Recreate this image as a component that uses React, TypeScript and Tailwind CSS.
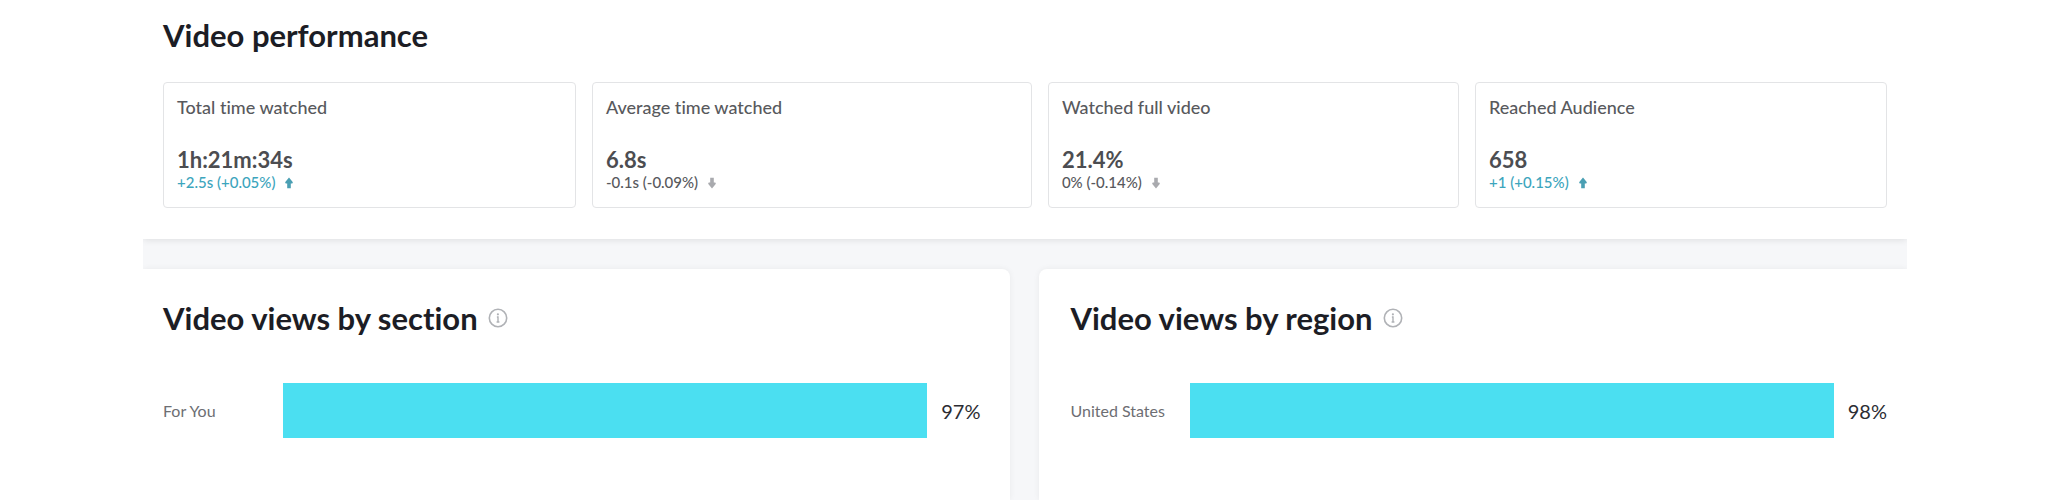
type Metric = { label: string; value: string; delta: string; up: boolean; grow: string };

const metrics: Metric[] = [
  { label: "Total time watched", value: "1h:21m:34s", delta: "+2.5s (+0.05%)", up: true, grow: "flex-[413]" },
  { label: "Average time watched", value: "6.8s", delta: "-0.1s (-0.09%)", up: false, grow: "flex-[442]" },
  { label: "Watched full video", value: "21.4%", delta: "0% (-0.14%)", up: false, grow: "flex-[411]" },
  { label: "Reached Audience", value: "658", delta: "+1 (+0.15%)", up: true, grow: "flex-[412]" },
];

function Arrow({ up }: { up: boolean }) {
  return (
    <svg
      viewBox="0 0 8 12"
      className={up ? "h-3 w-2 text-[#4a9fb3]" : "h-3 w-2 rotate-180 text-[#a9aaae]"}
      aria-hidden="true"
    >
      <path d="M4 0.4 7.9 5.2 7.3 6.4H5.8V11.2H2.2V6.4H0.7L0.1 5.2Z" fill="currentColor" />
    </svg>
  );
}

function MetricCard({ metric }: { metric: Metric }) {
  return (
    <article className={`${metric.grow} min-w-0 rounded border border-[#e3e4e6] px-[13px] pt-[11px] pb-[14px]`}>
      <h3 className="text-lg leading-[26px] font-medium text-[#58595d]">{metric.label}</h3>
      <p className="mt-7 text-[22px] leading-6 font-bold text-[#4c4d51]">{metric.value}</p>
      <div
        className={`flex items-center gap-[10px] text-[15px] leading-[21px] font-medium ${
          metric.up ? "text-[#3ca5bd]" : "text-[#58595d]"
        }`}
      >
        <span>{metric.delta}</span>
        <Arrow up={metric.up} />
      </div>
    </article>
  );
}

function InfoIcon() {
  return (
    <svg viewBox="0 0 20 20" className="h-5 w-5 text-[#b0b2b6]" fill="none" stroke="currentColor" aria-hidden="true">
      <circle cx="10" cy="10" r="8.7" strokeWidth="1.6" />
      <circle cx="9.9" cy="6.3" r="1.1" fill="currentColor" stroke="none" />
      <path d="M8.9 9H10V13.9M8.6 14H11.4" strokeWidth="1.4" />
    </svg>
  );
}

type PanelProps = { title: string; label: string; value: string; className: string };

function BarPanel({ title, label, value, className }: PanelProps) {
  return (
    <section className={`min-w-0 bg-white pt-7 pb-15 shadow-[0_0_6px_rgba(0,0,0,0.06)] ${className}`}>
      <div className="flex items-center gap-[10px]">
        <h2 className="text-[31px] leading-[42px] font-bold text-[#1c1d25]">{title}</h2>
        <button type="button" aria-label={`About ${title}`}>
          <InfoIcon />
        </button>
      </div>
      <div className="mt-11 flex items-center">
        <span className="w-[120px] shrink-0 text-base text-[#6d6e73]">{label}</span>
        <div className="h-[55px] min-w-0 flex-1 bg-[#4bdff1]" />
        <span className="w-[53px] shrink-0 text-right text-xl text-[#2c2d33]">{value}</span>
      </div>
    </section>
  );
}

export default function App() {
  return (
    <div className="min-h-screen bg-white px-[143px] font-['Lato','Open_Sans',sans-serif] [font-variant-ligatures:none]">
      <main className="flex min-h-screen flex-col overflow-hidden bg-[#f6f7f9]">
        <section className="bg-white px-5 pt-[14px] pb-[31px] shadow-[0_1px_7px_rgba(0,0,0,0.10)]">
          <h2 className="text-[31px] leading-[42px] font-bold text-[#1c1d25]">Video performance</h2>
          <div className="mt-[26px] flex gap-4">
            {metrics.map((metric) => (
              <MetricCard key={metric.label} metric={metric} />
            ))}
          </div>
        </section>
        <div className="mt-[30px] flex flex-1 gap-[29px]">
          <BarPanel
            title="Video views by section"
            label="For You"
            value="97%"
            className="flex-[868] rounded-tr-lg pr-[30px] pl-5"
          />
          <BarPanel
            title="Video views by region"
            label="United States"
            value="98%"
            className="flex-[867] rounded-tl-lg pr-5 pl-[31px]"
          />
        </div>
      </main>
    </div>
  );
}
